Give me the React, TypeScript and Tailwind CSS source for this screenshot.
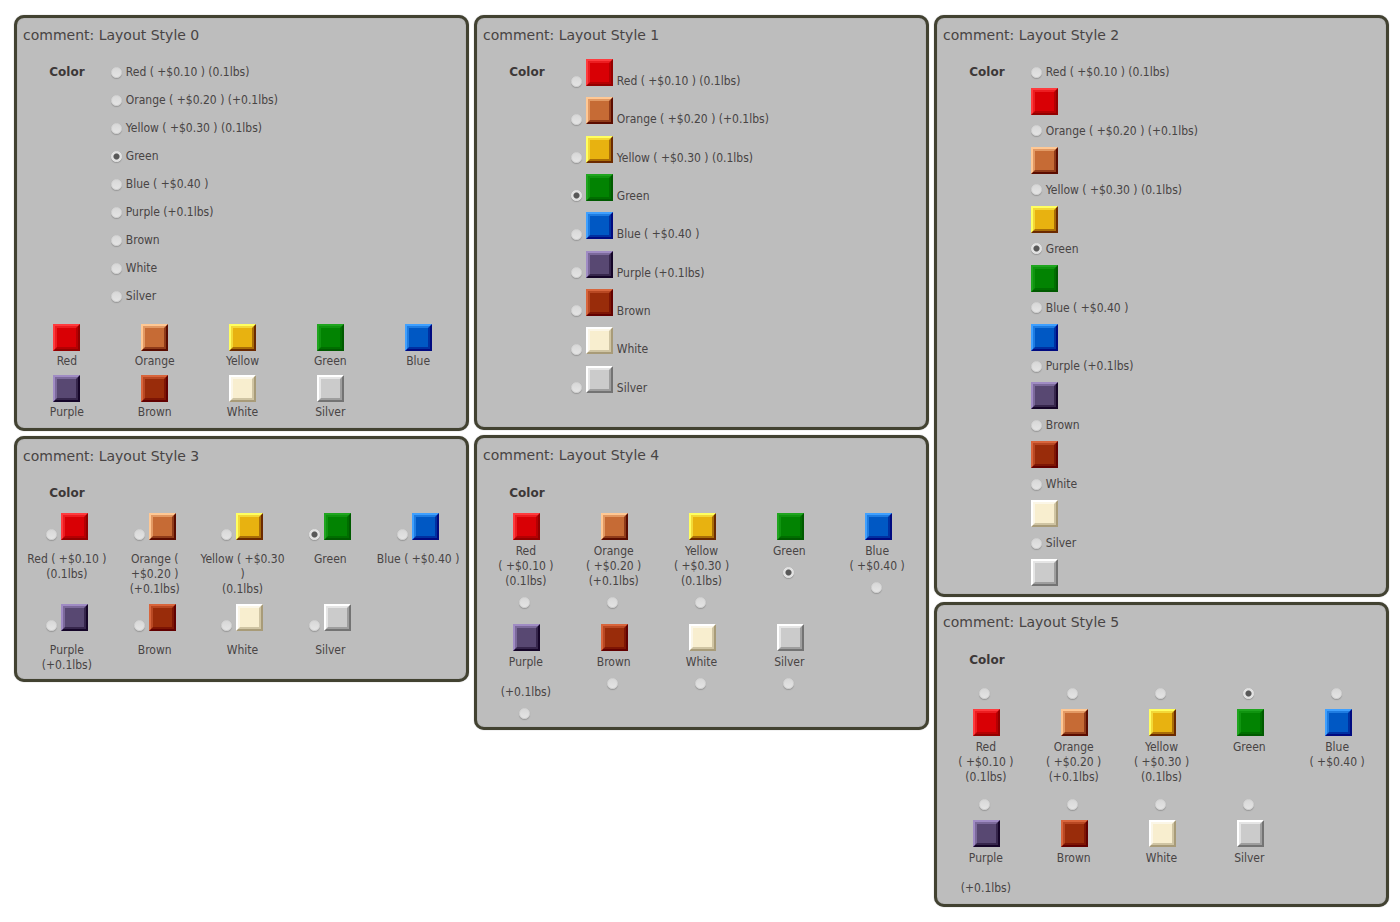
import { useId, useState } from "react";
import type { ReactNode } from "react";

type Option = {
  name: string;
  price?: string;
  weight?: string;
  face: string;
  /* Line breaks used where the caption sits below the swatch. */
  wrapped: string[];
};

const options: Option[] = [
  { name: "Red", price: "( +$0.10 )", weight: "(0.1lbs)", wrapped: ["Red ( +$0.10 )", "(0.1lbs)"], face: "bg-[#d90005] border-t-[#ff3b3e] border-l-[#ff3b3e] border-r-[#930000] border-b-[#930000]" },
  { name: "Orange", price: "( +$0.20 )", weight: "(+0.1lbs)", wrapped: ["Orange (", "+$0.20 )", "(+0.1lbs)"], face: "bg-[#c66b35] border-t-[#ffc894] border-l-[#ffc894] border-r-[#5a0c00] border-b-[#5a0c00]" },
  { name: "Yellow", price: "( +$0.30 )", weight: "(0.1lbs)", wrapped: ["Yellow ( +$0.30", ")", "(0.1lbs)"], face: "bg-[#e8b210] border-t-[#ffff60] border-l-[#ffff60] border-r-[#6b2a00] border-b-[#6b2a00]" },
  { name: "Green", wrapped: ["Green"], face: "bg-[#028302] border-t-[#1fa51f] border-l-[#1fa51f] border-r-[#005a00] border-b-[#005a00]" },
  { name: "Blue", price: "( +$0.40 )", wrapped: ["Blue ( +$0.40 )"], face: "bg-[#0058c4] border-t-[#3fa0ff] border-l-[#3fa0ff] border-r-[#000a80] border-b-[#000a80]" },
  { name: "Purple", weight: "(+0.1lbs)", wrapped: ["Purple", "(+0.1lbs)"], face: "bg-[#584872] border-t-[#a08cc4] border-l-[#a08cc4] border-r-[#150528] border-b-[#150528]" },
  { name: "Brown", wrapped: ["Brown"], face: "bg-[#992c0a] border-t-[#d8653c] border-l-[#d8653c] border-r-[#620000] border-b-[#620000]" },
  { name: "White", wrapped: ["White"], face: "bg-[#f8eecf] border-t-[#ffffff] border-l-[#ffffff] border-r-[#a89b78] border-b-[#a89b78]" },
  { name: "Silver", wrapped: ["Silver"], face: "bg-[#cbcbcb] border-t-[#ffffff] border-l-[#ffffff] border-r-[#737373] border-b-[#737373]" },
];

function inlineCaption(o: Option) {
  return [o.name, o.price, o.weight].filter(Boolean).join(" ");
}

/* Name, price and weight on lines of their own; a missing price leaves a gap. */
function stackedCaption(o: Option) {
  const lines = [o.name];
  if (o.price || o.weight) lines.push(o.price ?? "\u00a0");
  if (o.weight) lines.push(o.weight);
  return lines;
}

/* Two nested bevels: the inner one is a softer shade of the outer. */
function Swatch({ face }: { face: string }) {
  return (
    <span aria-hidden="true" className={`block size-[27px] shrink-0 border-2 ${face}`}>
      <span className="block size-full border-2 border-inherit opacity-50" />
    </span>
  );
}

function Lines({ lines }: { lines: string[] }) {
  return (
    <span className="block text-center leading-[15px] whitespace-nowrap">
      {lines.map((line, i) => (
        <span key={i} className="block">{line}</span>
      ))}
    </span>
  );
}

type RadioProps = { id: string; group: string; value: string; chosen: string; onChoose: (v: string) => void };

function Radio({ id, group, value, chosen, onChoose }: RadioProps) {
  return (
    <input
      type="radio"
      id={id}
      name={group}
      value={value}
      checked={chosen === value}
      onChange={() => onChoose(value)}
      className="m-0 block size-[11px] shrink-0 appearance-none rounded-full border border-[#d2d2d2] bg-linear-to-b from-[#d8d8d8] to-[#e4e4e4] shadow-[0_1px_1px_#999999] checked:border-[#e4e4e4] checked:bg-radial checked:from-[#585858] checked:from-40% checked:to-[#e2e2e2] checked:to-55%"
    />
  );
}

function useChoice() {
  const group = useId();
  const [chosen, setChosen] = useState("Green");
  return (o: Option) => ({ id: `${group}-${o.name}`, group, value: o.name, chosen, onChoose: setChosen });
}

function Panel({ style, children }: { style: number; children: ReactNode }) {
  return (
    <section className="rounded-[10px] border-3 border-[#424231] bg-[#bdbdbd] pr-1 pl-[6px] shadow-[0_0_1px_#777777,inset_0_0_1px_#777777]">
      <h2 className="pt-[7px] text-[14px] leading-5 font-normal">comment: Layout Style {style}</h2>
      {children}
    </section>
  );
}

function ColorTitle() {
  return <h3 className="w-1/5 shrink-0 text-center font-['DejaVu_Sans',sans-serif] text-[12px] leading-4 font-bold text-[#3c3838]">Color</h3>;
}

function ListPanel() {
  const radio = useChoice();
  return (
    <Panel style={0}>
      <div className="flex pt-[19px] pb-5">
        <ColorTitle />
        <ul className="flex flex-col gap-3">
          {options.map((o) => (
            <li key={o.name} className="flex h-4 items-center gap-1">
              <Radio {...radio(o)} />
              <label htmlFor={radio(o).id}>{inlineCaption(o)}</label>
            </li>
          ))}
        </ul>
      </div>
      <ul className="grid grid-cols-5 gap-y-[6px] pb-2">
        {options.map((o) => (
          <li key={o.name} className="flex flex-col items-center gap-[3px]">
            <Swatch face={o.face} />
            <Lines lines={[o.name]} />
          </li>
        ))}
      </ul>
    </Panel>
  );
}

function InlineSwatchPanel() {
  const radio = useChoice();
  return (
    <Panel style={1}>
      <div className="flex pt-[14px] pb-[23px]">
        <div className="contents [&>h3]:pt-[5px]"><ColorTitle /></div>
        <ul className="grid h-[345px] auto-rows-fr">
          {options.map((o) => (
            <li key={o.name} className="flex items-start">
              <label className="flex items-end gap-1">
                <span className="flex h-4 items-center"><Radio {...radio(o)} /></span>
                <span className="pb-[3px]"><Swatch face={o.face} /></span>
                <span>{inlineCaption(o)}</span>
              </label>
            </li>
          ))}
        </ul>
      </div>
    </Panel>
  );
}

function SwatchBelowPanel() {
  const radio = useChoice();
  return (
    <Panel style={2}>
      <div className="flex pt-[19px]">
        <ColorTitle />
        <ul className="grid h-[530px] auto-rows-fr">
          {options.map((o) => (
            <li key={o.name}>
              <label className="flex flex-col gap-2">
                <span className="flex h-4 items-center gap-1">
                  <Radio {...radio(o)} />
                  {inlineCaption(o)}
                </span>
                <Swatch face={o.face} />
              </label>
            </li>
          ))}
        </ul>
      </div>
    </Panel>
  );
}

function RadioBesidePanel() {
  const radio = useChoice();
  return (
    <Panel style={3}>
      <div className="flex pt-[19px]"><ColorTitle /></div>
      <ul className="grid grid-cols-5 gap-y-[7px] pt-3 pb-[6px]">
        {options.map((o) => (
          <li key={o.name}>
            <label className="flex flex-col items-center gap-3">
              <span className="flex items-end gap-1">
                <Radio {...radio(o)} />
                <Swatch face={o.face} />
              </span>
              <Lines lines={o.wrapped} />
            </label>
          </li>
        ))}
      </ul>
    </Panel>
  );
}

function RadioBelowPanel() {
  const radio = useChoice();
  return (
    <Panel style={4}>
      <div className="flex pt-5"><ColorTitle /></div>
      <ul className="grid grid-cols-5 gap-y-4 pt-3 pb-2">
        {options.map((o) => (
          <li key={o.name}>
            <label className="flex flex-col items-center">
              <Swatch face={o.face} />
              <span className="pt-1 pr-[2px] pb-2"><Lines lines={stackedCaption(o)} /></span>
              <span className="pr-1"><Radio {...radio(o)} /></span>
            </label>
          </li>
        ))}
      </ul>
    </Panel>
  );
}

function RadioAbovePanel() {
  const radio = useChoice();
  return (
    <Panel style={5}>
      <div className="flex pt-5"><ColorTitle /></div>
      <ul className="grid grid-cols-5 gap-y-[14px] pt-5 pb-2">
        {options.map((o) => (
          <li key={o.name}>
            <label className="flex flex-col items-center">
              <span className="pr-1"><Radio {...radio(o)} /></span>
              <span className="pt-[10px] pb-1"><Swatch face={o.face} /></span>
              <span className="pr-[2px]"><Lines lines={stackedCaption(o)} /></span>
            </label>
          </li>
        ))}
      </ul>
    </Panel>
  );
}

export default function App() {
  return (
    <main className="grid min-h-screen grid-cols-3 items-start gap-[5px] bg-white pt-[15px] pr-[11px] pb-4 pl-[14px] font-['DejaVu_Sans',sans-serif] text-[#484444]">
      <div className="flex flex-col gap-[5px] [&_li]:font-['DejaVu_Sans_Condensed','DejaVu_Sans',sans-serif] [&_li]:text-[12px] [&_li]:leading-4">
        <ListPanel />
        <RadioBesidePanel />
      </div>
      <div className="flex flex-col gap-[5px] [&_li]:font-['DejaVu_Sans_Condensed','DejaVu_Sans',sans-serif] [&_li]:text-[12px] [&_li]:leading-4">
        <InlineSwatchPanel />
        <RadioBelowPanel />
      </div>
      <div className="flex flex-col gap-[5px] [&_li]:font-['DejaVu_Sans_Condensed','DejaVu_Sans',sans-serif] [&_li]:text-[12px] [&_li]:leading-4">
        <SwatchBelowPanel />
        <RadioAbovePanel />
      </div>
    </main>
  );
}
